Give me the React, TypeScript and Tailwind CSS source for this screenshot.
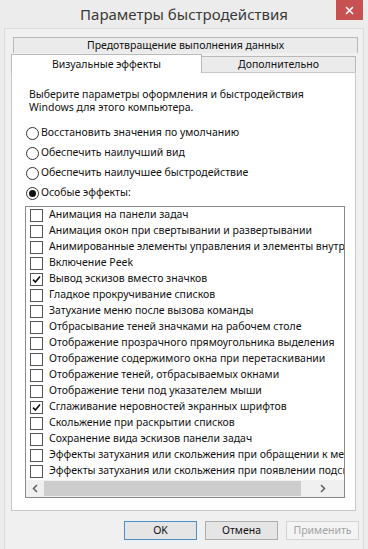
import React from 'react';

const effects: { label: string; checked?: boolean }[] = [
  { label: 'Анимация на панели задач' },
  { label: 'Анимация окон при свертывании и развертывании' },
  { label: 'Анимированные элементы управления и элементы внутри окна' },
  { label: 'Включение Peek' },
  { label: 'Вывод эскизов вместо значков', checked: true },
  { label: 'Гладкое прокручивание списков' },
  { label: 'Затухание меню после вызова команды' },
  { label: 'Отбрасывание теней значками на рабочем столе' },
  { label: 'Отображение прозрачного прямоугольника выделения' },
  { label: 'Отображение содержимого окна при перетаскивании' },
  { label: 'Отображение теней, отбрасываемых окнами' },
  { label: 'Отображение тени под указателем мыши' },
  { label: 'Сглаживание неровностей экранных шрифтов', checked: true },
  { label: 'Скольжение при раскрытии списков' },
  { label: 'Сохранение вида эскизов панели задач' },
  { label: 'Эффекты затухания или скольжения при обращении к меню' },
  { label: 'Эффекты затухания или скольжения при появлении подсказок' },
];

const radios = [
  { label: 'Восстановить значения по умолчанию' },
  { label: 'Обеспечить наилучший вид' },
  { label: 'Обеспечить наилучшее быстродействие' },
  { label: 'Особые эффекты:', selected: true },
];

function Radio({ selected }: { selected?: boolean }) {
  return (
    <span className="w-[13px] h-[13px] rounded-full border border-[#333] bg-white flex items-center justify-center shrink-0">
      {selected && <span className="w-[7px] h-[7px] rounded-full bg-[#111]" />}
    </span>
  );
}

function Checkbox({ checked }: { checked?: boolean }) {
  return (
    <span className="w-[13px] h-[13px] border border-[#555] bg-white flex items-center justify-center shrink-0">
      {checked && (
        <svg width="9" height="9" viewBox="0 0 9 9">
          <path d="M1 4.6 L3.4 7 L8 1.5" fill="none" stroke="#111" strokeWidth="1.7" />
        </svg>
      )}
    </span>
  );
}

export default function App() {
  return (
    <div className="w-[368px] h-[549px] bg-[#ececec] flex flex-col overflow-hidden text-[#111] font-['Noto_Sans',sans-serif]">
      {/* Title bar */}
      <div className="h-[28px] grid grid-cols-[1fr_auto_1fr] items-start shrink-0">
        <div />
        <div className="text-[15px] text-[#3a3a3a] pt-[3px] leading-[22px]">Параметры быстродействия</div>
        <div className="flex justify-end pr-[5px]">
          <div className="w-[27px] h-[20px] bg-[#c75050] flex items-center justify-center">
            <svg width="9" height="9" viewBox="0 0 9 9">
              <path d="M1 1 L8 8 M8 1 L1 8" stroke="#fff" strokeWidth="1.6" />
            </svg>
          </div>
        </div>
      </div>

      {/* Client area */}
      <div className="flex-1 ml-[4px] mr-[4px] bg-[#f0f0f0] border-t border-l border-r border-[#dcdcdc] pl-[6px] pr-[7px] pt-[8px] flex flex-col text-[10.5px]">
        {/* Back tab row */}
        <div className="ml-[2px] mr-[-2px] h-[16px] border border-b-0 border-[#b9b9b9] bg-[#ebebeb] flex items-center justify-center leading-none">
          Предотвращение выполнения данных
        </div>
        {/* Front tab row */}
        <div className="flex items-end h-[19px]">
          <div className="w-[191px] h-[19px] bg-white border border-b-0 border-[#b9b9b9] flex items-start justify-center pt-[3px] leading-[13px] relative z-10 -mb-px">
            Визуальные эффекты
          </div>
          <div className="flex-1 h-[16px] bg-[#ebebeb] border border-l-0 border-b-0 border-[#b9b9b9] flex items-center justify-center leading-none">
            Дополнительно
          </div>
        </div>

        {/* Panel */}
        <div className="h-[439px] bg-white border border-[#c9c9c9] pt-[15px] pl-[14px] pr-[10px] flex flex-col">
          <p className="pl-[3px] leading-[13px] text-[#111]">
            Выберите параметры оформления и быстродействия
            <br />
            Windows для этого компьютера.
          </p>

          <div className="mt-[9px] flex flex-col">
            {radios.map((r) => (
              <div key={r.label} className="h-[20px] flex items-center gap-[2px]">
                <Radio selected={r.selected} />
                <span>{r.label}</span>
              </div>
            ))}
          </div>

          <div className="mt-[3px] ml-[-1px] w-[320px] h-[292px] border border-[#8a8a8a] bg-white flex flex-col">
            <div className="flex-1 overflow-hidden">
              {effects.map((e) => (
                <div key={e.label} className="h-[16px] flex items-center pl-[4px] gap-[6px] whitespace-nowrap">
                  <Checkbox checked={e.checked} />
                  <span>{e.label}</span>
                </div>
              ))}
            </div>
            <div className="h-[17px] bg-[#f0f0f0] flex items-center">
              <div className="w-[18px] flex justify-center">
                <svg width="6" height="9" viewBox="0 0 6 9">
                  <path d="M5 1 L1.5 4.5 L5 8" fill="none" stroke="#606060" strokeWidth="1.5" />
                </svg>
              </div>
              <div className="w-[257px] h-[15px] bg-[#cdcdcd]" />
              <div className="flex-1 flex justify-center">
                <svg width="6" height="9" viewBox="0 0 6 9">
                  <path d="M1 1 L4.5 4.5 L1 8" fill="none" stroke="#606060" strokeWidth="1.5" />
                </svg>
              </div>
            </div>
          </div>
        </div>

        {/* Buttons */}
        <div className="flex justify-end gap-[8px] mt-[10px] mr-[-3px]">
          <button className="w-[73px] h-[19px] border border-[#4a8fc7] bg-[#e5e5e5] leading-none">OK</button>
          <button className="w-[73px] h-[19px] border border-[#adadad] bg-[#e5e5e5] leading-none">Отмена</button>
          <button className="w-[73px] h-[19px] border border-[#d3d3d3] bg-[#f4f4f4] text-[#a3a3a3] leading-none">Применить</button>
        </div>
      </div>
    </div>
  );
}
